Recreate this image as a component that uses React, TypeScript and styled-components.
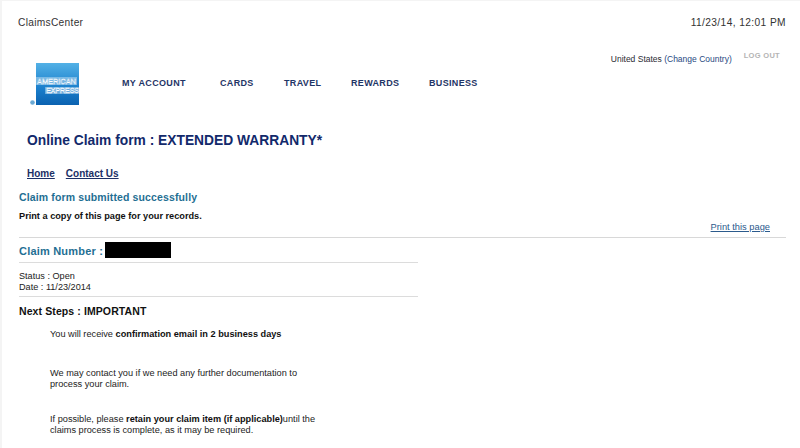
import React from "react";
import styled, { createGlobalStyle } from "styled-components";

const Global = createGlobalStyle`
  html, body { margin: 0; padding: 0; background: #fff; }
  body { font-family: "Liberation Sans", Arial, sans-serif; color: #1a1a1a; }
  #root { width: 800px; height: 448px; overflow: hidden; }
`;

const Page = styled.div`
  width: 800px;
  height: 448px;
  box-sizing: border-box;
  overflow: hidden;
  border-left: 2px solid #f4f4f4;
  border-top: 1px solid #f4f4f4;
  padding-top: 15px;
`;
const TopBar = styled.div`
  display: flex;
  justify-content: space-between;
  padding: 0 14px 0 16px;
  height: 14px;
  font-size: 10.2px;
  line-height: 14px;
  letter-spacing: 0.3px;
  color: #333;
`;
const DateText = styled.span`
  letter-spacing: 0.4px;
`;
const Utility = styled.div`
  display: flex;
  justify-content: flex-end;
  align-items: center;
  gap: 12px;
  height: 14px;
  margin-top: 22px;
  padding-right: 20px;
  font-size: 8.5px;
  line-height: 14px;
  color: #2b2b33;
`;
const ChangeLink = styled.span`
  color: #28497f;
`;
const LogOut = styled.span`
  position: relative;
  top: -3px;
  font-size: 7.5px;
  font-weight: bold;
  letter-spacing: 0.3px;
  color: #b4b4b4;
`;
const Header = styled.div`
  display: flex;
  align-items: flex-start;
  height: 65px;
  padding-left: 26px;
`;
const LogoWrap = styled.div`
  width: 51px;
  height: 43px;
  margin-top: -3px;
`;
const Nav = styled.nav`
  display: flex;
  margin-left: 43px;
  padding-top: 10px;
`;
const NavItem = styled.span<{ $w: number }>`
  width: ${(p) => p.$w}px;
  font-size: 9px;
  line-height: 14px;
  font-weight: bold;
  letter-spacing: 0.33px;
  color: #1f3566;
  white-space: nowrap;
`;
const Title = styled.h1`
  margin: 0;
  padding-left: 25px;
  font-size: 13.8px;
  line-height: 20px;
  font-weight: bold;
  color: #12296b;
`;
const Crumbs = styled.div`
  display: flex;
  gap: 11px;
  margin-top: 16px;
  padding-left: 25px;
  font-size: 10px;
  line-height: 14px;
  font-weight: bold;
  color: #1c2f66;
  text-decoration: underline;
`;
const Content = styled.main`
  padding-left: 17px;
`;
const Success = styled.div`
  margin-top: 9px;
  font-size: 10.5px;
  line-height: 14px;
  font-weight: bold;
  letter-spacing: 0.13px;
  color: #1f6f93;
`;
const PrintNote = styled.div`
  margin-top: 5px;
  font-size: 9.2px;
  line-height: 14px;
  font-weight: bold;
  color: #111;
`;
const PrintRow = styled.div`
  display: flex;
  justify-content: flex-end;
  height: 14px;
  margin-top: -3px;
  padding-right: 30px;
  font-size: 9.3px;
  line-height: 14px;
  color: #2b5a8c;
  text-decoration: underline;
`;
const WideRule = styled.div`
  width: 767px;
  height: 1px;
  margin-top: 3px;
  background: #d8d8d8;
`;
const ClaimRow = styled.div`
  display: flex;
  align-items: center;
  gap: 2px;
  height: 24px;
  font-size: 11px;
  font-weight: bold;
  letter-spacing: 0.2px;
  color: #1f6f93;
`;
const ClaimLabel = styled.span`
  padding-top: 2px;
`;
const Redacted = styled.span`
  display: block;
  width: 66px;
  height: 16px;
  background: #000;
`;
const Rule = styled.div`
  width: 399px;
  height: 1px;
  background: #dcdcdc;
`;
const Meta = styled.div`
  margin-top: 8px;
  margin-bottom: 3px;
  font-size: 9.15px;
  line-height: 11px;
  color: #222;
`;
const NextTitle = styled.h2`
  margin: 7px 0 0;
  font-size: 10.5px;
  line-height: 14px;
  font-weight: bold;
  letter-spacing: 0.1px;
  color: #111;
`;
const Steps = styled.div`
  display: flex;
  flex-direction: column;
  margin-top: 11px;
  padding-left: 31px;
`;
const Step = styled.p<{ $gap: number }>`
  width: 270px;
  margin: ${(p) => p.$gap}px 0 0;
  font-size: 9.2px;
  line-height: 11px;
  color: #222;
  b { color: #111; }
`;

const Logo = () => (
  <LogoWrap>
    <svg width="51" height="43" viewBox="0 0 51 43">
      <defs>
        <linearGradient id="amex" x1="0" y1="0" x2="0" y2="1">
          <stop offset="0" stopColor="#53b1e6" />
          <stop offset="0.6" stopColor="#1a7fcc" />
          <stop offset="1" stopColor="#0b62b0" />
        </linearGradient>
      </defs>
      <rect x="8" y="0" width="43" height="42" fill="url(#amex)" />
      <rect x="8" y="14" width="41" height="8" fill="#d4e9f7" opacity="0.45" />
      <rect x="17" y="24" width="34" height="7" fill="#d4e9f7" opacity="0.45" />
      <text x="9" y="21" fontFamily="Liberation Sans" fontSize="7.5" fill="#1a7fcc" stroke="#fff" strokeWidth="0.45" textLength="39">AMERICAN</text>
      <text x="18" y="30.3" fontFamily="Liberation Sans" fontSize="7.5" fill="#1a7fcc" stroke="#fff" strokeWidth="0.45" textLength="33">EXPRESS</text>
      <circle cx="4.5" cy="39.5" r="2.3" fill="#6aa9d4" />
    </svg>
  </LogoWrap>
);

export default function App() {
  return (
    <>
      <Global />
      <Page>
        <TopBar>
          <span>ClaimsCenter</span>
          <DateText>11/23/14, 12:01 PM</DateText>
        </TopBar>
        <Utility>
          <span>
            United States <ChangeLink>(Change Country)</ChangeLink>
          </span>
          <LogOut>LOG OUT</LogOut>
        </Utility>
        <Header>
          <Logo />
          <Nav>
            <NavItem $w={98}>MY ACCOUNT</NavItem>
            <NavItem $w={64}>CARDS</NavItem>
            <NavItem $w={67}>TRAVEL</NavItem>
            <NavItem $w={78}>REWARDS</NavItem>
            <NavItem $w={60}>BUSINESS</NavItem>
          </Nav>
        </Header>
        <Title>Online Claim form : EXTENDED WARRANTY*</Title>
        <Crumbs>
          <span>Home</span>
          <span>Contact Us</span>
        </Crumbs>
        <Content>
          <Success>Claim form submitted successfully</Success>
          <PrintNote>Print a copy of this page for your records.</PrintNote>
          <PrintRow>Print this page</PrintRow>
          <WideRule />
          <ClaimRow>
            <ClaimLabel>Claim Number :</ClaimLabel>
            <Redacted />
          </ClaimRow>
          <Rule />
          <Meta>
            Status : Open
            <br />
            Date : 11/23/2014
          </Meta>
          <Rule />
          <NextTitle>Next Steps : IMPORTANT</NextTitle>
          <Steps>
            <Step $gap={0}>
              You will receive <b>confirmation email in 2 business days</b>
            </Step>
            <Step $gap={28}>
              We may contact you if we need any further documentation to process your claim.
            </Step>
            <Step $gap={24}>
              If possible, please <b>retain your claim item (if applicable)</b>until the claims
              process is complete, as it may be required.
            </Step>
          </Steps>
        </Content>
      </Page>
    </>
  );
}
